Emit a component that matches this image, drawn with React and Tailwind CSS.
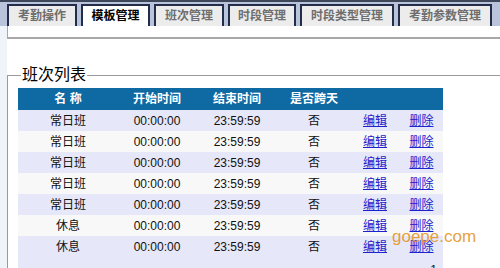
import React from "react";

const tabs = [
  { label: "考勤操作", w: "w-[70px]" },
  { label: "模板管理", w: "w-[69px]", active: true },
  { label: "班次管理", w: "w-[70px]" },
  { label: "时段管理", w: "w-[68px]" },
  { label: "时段类型管理", w: "w-[94px]" },
  { label: "考勤参数管理", w: "w-[94px]" },
];

const rows = [
  ["常日班", "00:00:00", "23:59:59", "否"],
  ["常日班", "00:00:00", "23:59:59", "否"],
  ["常日班", "00:00:00", "23:59:59", "否"],
  ["常日班", "00:00:00", "23:59:59", "否"],
  ["常日班", "00:00:00", "23:59:59", "否"],
  ["休息", "00:00:00", "23:59:59", "否"],
  ["休息", "00:00:00", "23:59:59", "否"],
];

export default function App() {
  return (
    <div
      className="relative w-[500px] h-[268px] overflow-hidden bg-white"
      style={{ fontFamily: '"Liberation Sans", "Noto Sans CJK SC", sans-serif' }}
    >
      {/* tab bar */}
      <div className="h-[26px] bg-[#b9c4dc] border-t-2 border-[#3e4759] flex items-end pl-[7px] gap-[4px]">
        {tabs.map((t) => (
          <div
            key={t.label}
            className={`${t.w} shrink-0 h-[22px] border-2 border-b-0 border-[#232d49] flex items-center justify-center text-[12px] font-bold leading-none ${
              t.active ? "bg-white text-black" : "bg-[#ececec] text-[#6e6e6e]"
            }`}
          >
            {t.label}
          </div>
        ))}
      </div>

      <div className="flex h-[242px] overflow-hidden">
        <div className="w-[7px] shrink-0 bg-[#eff3fa]" />
        <div className="w-[493px] shrink-0 overflow-hidden">
          <div className="h-[13px] bg-white border-l border-b-2 border-[#a8a8a8]" />
          <fieldset className="mt-[27px] w-[520px] border border-[#9a9a9a] pl-[10px] pt-[4px]">
            <legend className="ml-[3px] px-[1px] text-[16px] leading-[18px] text-black">
              班次列表
            </legend>
            <table className="w-[425px] table-fixed border-collapse text-[12px] leading-none">
              <colgroup>
                <col className="w-[100px]" />
                <col className="w-[78px]" />
                <col className="w-[82px]" />
                <col className="w-[72px]" />
                <col className="w-[50px]" />
                <col className="w-[43px]" />
              </colgroup>
              <thead>
                <tr className="h-[22px] bg-[#0f69a2] text-white font-bold">
                  <th className="text-center font-bold">名 称</th>
                  <th className="text-center font-bold">开始时间</th>
                  <th className="text-center font-bold">结束时间</th>
                  <th className="text-center font-bold">是否跨天</th>
                  <th />
                  <th />
                </tr>
              </thead>
              <tbody>
                {rows.map((r, i) => (
                  <tr
                    key={i}
                    className={`h-[21px] text-[#111] ${i % 2 === 0 ? "bg-[#e6e7f8]" : "bg-[#f8f8f8]"}`}
                  >
                    <td className="text-center">{r[0]}</td>
                    <td className="text-center">{r[1]}</td>
                    <td className="text-center">{r[2]}</td>
                    <td className="text-center">{r[3]}</td>
                    <td className="text-center">
                      <a className="text-[#1c22cc] underline">编辑</a>
                    </td>
                    <td className="text-center">
                      <a className="text-[#1c22cc] underline">删除</a>
                    </td>
                  </tr>
                ))}
                <tr className="h-[21px] bg-[#e6e7f8]">
                  <td colSpan={6} className="text-right pr-[6px] pt-[7px] align-top text-[#111]">
                    1
                  </td>
                </tr>
              </tbody>
            </table>
          </fieldset>
        </div>
      </div>

      <div className="absolute left-[392px] top-[228px] text-[17px] leading-[17px] text-[#e59422]/90">
        goepe.com
      </div>
    </div>
  );
}
